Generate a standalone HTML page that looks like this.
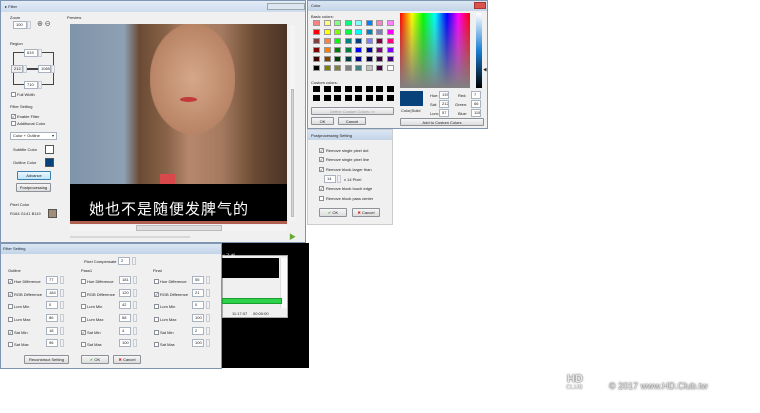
<!DOCTYPE html>
<html><head><meta charset="utf-8"><style>
*{margin:0;padding:0;box-sizing:border-box}
body{width:760px;height:413px;background:#fff;position:relative;overflow:hidden;font-family:"Liberation Sans","Noto Sans CJK SC",sans-serif;font-size:4px;color:#222}
.a{position:absolute}
.t{position:absolute;white-space:nowrap;font-size:4px;line-height:6px}
.in{position:absolute;background:#fff;border:1px solid #a9b3bf;height:8px;font-size:4px;line-height:6px;padding-left:2px;white-space:nowrap;overflow:hidden}
.sp{position:absolute;width:4px;height:8px;border:1px solid #c8ccd2;background:#eef0f3}
.cb{position:absolute;width:5px;height:5px;border:1px solid #8a8f96;background:#fff;font-size:4px;line-height:3px;text-align:center;color:#333}
.btn{position:absolute;border:1px solid #8d9299;border-radius:1px;background:linear-gradient(#f6f6f6,#dcdcdc);font-size:4px;line-height:7px;text-align:center;white-space:nowrap;overflow:hidden}
.win{position:absolute;background:#f0f0f0;border:1px solid #7f96b2}
.tb{position:absolute;left:0;right:0;top:0;height:10px;background:linear-gradient(#dbe6f3,#c3d4e9)}
</style></head><body>

<div class="a" style="left:222px;top:243px;width:87px;height:125px;background:#000"></div>
<div class="a" style="left:222px;top:255px;width:66px;height:63px;background:#f0f0f0;border:1px solid #aaa"></div>
<div class="a" style="left:222px;top:258px;width:57px;height:20px;background:#000"></div>
<div class="t" style="left:223px;top:253px;color:#eee">ζ 了 吧</div>
<div class="a" style="left:280px;top:258px;width:7px;height:50px;background:#fafafa;border-left:1px solid #ddd"></div>
<div class="a" style="left:222px;top:298px;width:60px;height:6px;background:#2ed24a;border:1px solid #1a9e30"></div>
<div class="t" style="left:232px;top:311px">11:17:07</div>
<div class="t" style="left:253px;top:311px">00:00:00</div>

<div class="win" style="left:0;top:0;width:306px;height:243px;background:#f0f0f0">
 <div class="tb" style="height:11px;background:linear-gradient(#e3ecf7,#cddcee)"></div>
 <div class="t" style="left:4px;top:3px;color:#223">▸ Filter</div>
 <div class="a" style="left:266px;top:2px;width:38px;height:7px;border:1px solid #9aa;background:#dde6f0"></div>
 <div class="t" style="left:9px;top:14px">Zoom</div>
 <div class="in" style="left:12px;top:20px;width:14px">100</div><div class="sp" style="left:26px;top:20px"></div>
 <div class="t" style="left:36px;top:21px;font-size:6px">⊕ ⊖</div>
 <div class="t" style="left:9px;top:40px">Region</div>
 <div class="a" style="left:12px;top:51px;width:41px;height:33px;border:1px solid #444"></div>
 <div class="a" style="left:26px;top:67px;width:12px;height:2px;border-top:1px solid #444;border-bottom:1px solid #444"></div>
 <div class="in" style="left:23px;top:48px;width:14px">619</div><div class="sp" style="left:37px;top:48px"></div>
 <div class="in" style="left:10px;top:64px;width:12px;background:#eee">212</div><div class="sp" style="left:22px;top:64px"></div>
 <div class="in" style="left:37px;top:64px;width:13px">1065</div><div class="sp" style="left:50px;top:64px"></div>
 <div class="in" style="left:23px;top:80px;width:14px">710</div><div class="sp" style="left:37px;top:80px"></div>
 <div class="cb" style="left:10px;top:91px"></div><div class="t" style="left:16px;top:91px">Full Width</div>
 <div class="t" style="left:9px;top:103px">Filter Setting</div>
 <div class="cb" style="left:10px;top:113px">✓</div><div class="t" style="left:16px;top:113px">Enable Filter</div>
 <div class="cb" style="left:10px;top:120px"></div><div class="t" style="left:16px;top:120px">Additional Color</div>
 <div class="in" style="left:9px;top:131px;width:47px;height:8px">Color + Outline <span style="position:absolute;right:2px">▾</span></div>
 <div class="t" style="left:12px;top:146px">Subtitle Color</div>
 <div class="a" style="left:44px;top:144px;width:9px;height:9px;border:1px solid #555;background:#fff"></div>
 <div class="t" style="left:12px;top:159px">Outline Color</div>
 <div class="a" style="left:44px;top:157px;width:9px;height:9px;border:1px solid #555;background:#08427b"></div>
 <div class="btn" style="left:16px;top:170px;width:34px;height:9px;border-color:#3c7fb1;background:linear-gradient(#eaf6fd,#bee6fd)">Advance</div>
 <div class="btn" style="left:15px;top:182px;width:35px;height:9px">Postprocessing</div>
 <div class="t" style="left:9px;top:201px">Pixel Color</div>
 <div class="t" style="left:9px;top:210px">R164 G141 B119</div>
 <div class="a" style="left:47px;top:208px;width:9px;height:9px;border:1px solid #555;background:#a48d77"></div>
 <div class="t" style="left:66px;top:14px">Preview</div>
 <div class="a" style="left:69px;top:23px;width:217px;height:200px;overflow:hidden;background:linear-gradient(90deg,#7f93aa 0%,#8ea0b3 25%,#6b4a34 32%,#8a6449 45%,#b7876c 55%,#a47a5f 70%,#6b4a33 85%,#4a3326 100%)">
  <div class="a" style="left:80px;top:0;width:85px;height:110px;border-radius:45%;background:radial-gradient(#d6a78a,#b98466 70%,transparent 72%)"></div>
  <div class="a" style="left:110px;top:73px;width:17px;height:5px;border-radius:50%;background:#c23a3a"></div>
  <div class="a" style="left:90px;top:150px;width:15px;height:30px;background:#d9484a"></div>
  <div class="a" style="left:0;top:160px;width:217px;height:37px;background:#000"></div>
  <div class="t" style="left:19px;top:178px;font-size:15px;line-height:16px;color:#fff;letter-spacing:1px">她也不是随便发脾气的</div>
  <div class="a" style="left:0;top:197px;width:217px;height:3px;background:#b06050"></div>
 </div>
 <div class="a" style="left:289px;top:24px;width:5px;height:196px;background:#f4f4f4"></div>
 <div class="a" style="left:290px;top:88px;width:3px;height:128px;background:#d6d6d6;border:1px solid #bbb"></div>
 <div class="a" style="left:69px;top:224px;width:217px;height:6px;background:#f4f4f4"></div>
 <div class="a" style="left:135px;top:224px;width:86px;height:6px;background:#dedede;border:1px solid #bbb"></div>
 <div class="a" style="left:69px;top:235px;width:120px;height:2px;background:#d8d8d8"></div>
 <div class="t" style="left:288px;top:234px;color:#6a3;font-size:7px">▶</div>
</div>

<div class="win" style="left:0;top:243px;width:222px;height:126px">
 <div class="tb"></div>
 <div class="t" style="left:2px;top:2px;color:#123">Filter Setting</div>
 <div class="t" style="left:83px;top:15px">Pixel Compensate</div>
 <div class="in" style="left:117px;top:13px;width:12px">2</div><div class="sp" style="left:131px;top:13px"></div>
 <div class="t" style="left:7px;top:24px">Outline</div>
 <div class="t" style="left:80px;top:24px">Pass1</div>
 <div class="t" style="left:152px;top:24px">Final</div>
 <div class="cb" style="left:7px;top:35px">✓</div><div class="t" style="left:13px;top:35px">Hue Difference</div><div class="in" style="left:45px;top:32px;width:12px">77</div><div class="sp" style="left:59px;top:32px"></div>
 <div class="cb" style="left:7px;top:48px">✓</div><div class="t" style="left:13px;top:48px">RGB Difference</div><div class="in" style="left:45px;top:45px;width:12px">184</div><div class="sp" style="left:59px;top:45px"></div>
 <div class="cb" style="left:7px;top:60px"></div><div class="t" style="left:13px;top:60px">Lum Min</div><div class="in" style="left:45px;top:57px;width:12px">0</div><div class="sp" style="left:59px;top:57px"></div>
 <div class="cb" style="left:7px;top:73px"></div><div class="t" style="left:13px;top:73px">Lum Max</div><div class="in" style="left:45px;top:70px;width:12px">86</div><div class="sp" style="left:59px;top:70px"></div>
 <div class="cb" style="left:7px;top:86px">✓</div><div class="t" style="left:13px;top:86px">Sat Min</div><div class="in" style="left:45px;top:83px;width:12px">18</div><div class="sp" style="left:59px;top:83px"></div>
 <div class="cb" style="left:7px;top:98px"></div><div class="t" style="left:13px;top:98px">Sat Max</div><div class="in" style="left:45px;top:95px;width:12px">96</div><div class="sp" style="left:59px;top:95px"></div>

 <div class="cb" style="left:80px;top:35px"></div><div class="t" style="left:86px;top:35px">Hue Difference</div><div class="in" style="left:118px;top:32px;width:12px">181</div><div class="sp" style="left:132px;top:32px"></div>
 <div class="cb" style="left:80px;top:48px"></div><div class="t" style="left:86px;top:48px">RGB Difference</div><div class="in" style="left:118px;top:45px;width:12px">120</div><div class="sp" style="left:132px;top:45px"></div>
 <div class="cb" style="left:80px;top:60px"></div><div class="t" style="left:86px;top:60px">Lum Min</div><div class="in" style="left:118px;top:57px;width:12px">42</div><div class="sp" style="left:132px;top:57px"></div>
 <div class="cb" style="left:80px;top:73px"></div><div class="t" style="left:86px;top:73px">Lum Max</div><div class="in" style="left:118px;top:70px;width:12px">58</div><div class="sp" style="left:132px;top:70px"></div>
 <div class="cb" style="left:80px;top:86px">✓</div><div class="t" style="left:86px;top:86px">Sat Min</div><div class="in" style="left:118px;top:83px;width:12px">4</div><div class="sp" style="left:132px;top:83px"></div>
 <div class="cb" style="left:80px;top:98px"></div><div class="t" style="left:86px;top:98px">Sat Max</div><div class="in" style="left:118px;top:95px;width:12px">100</div><div class="sp" style="left:132px;top:95px"></div>

 <div class="cb" style="left:153px;top:35px"></div><div class="t" style="left:159px;top:35px">Hue Difference</div><div class="in" style="left:191px;top:32px;width:12px">55</div><div class="sp" style="left:205px;top:32px"></div>
 <div class="cb" style="left:153px;top:48px">✓</div><div class="t" style="left:159px;top:48px">RGB Difference</div><div class="in" style="left:191px;top:45px;width:12px">21</div><div class="sp" style="left:205px;top:45px"></div>
 <div class="cb" style="left:153px;top:60px"></div><div class="t" style="left:159px;top:60px">Lum Min</div><div class="in" style="left:191px;top:57px;width:12px">0</div><div class="sp" style="left:205px;top:57px"></div>
 <div class="cb" style="left:153px;top:73px"></div><div class="t" style="left:159px;top:73px">Lum Max</div><div class="in" style="left:191px;top:70px;width:12px">100</div><div class="sp" style="left:205px;top:70px"></div>
 <div class="cb" style="left:153px;top:86px"></div><div class="t" style="left:159px;top:86px">Sat Min</div><div class="in" style="left:191px;top:83px;width:12px">2</div><div class="sp" style="left:205px;top:83px"></div>
 <div class="cb" style="left:153px;top:98px"></div><div class="t" style="left:159px;top:98px">Sat Max</div><div class="in" style="left:191px;top:95px;width:12px">100</div><div class="sp" style="left:205px;top:95px"></div>

 <div class="btn" style="left:23px;top:111px;width:45px;height:9px">Reconstruct Setting</div>
 <div class="btn" style="left:80px;top:111px;width:28px;height:9px"><span style="color:#2a2">✔</span> OK</div>
 <div class="btn" style="left:112px;top:111px;width:28px;height:9px"><span style="color:#c22">✖</span> Cancel</div>
</div>

<div class="win" style="left:307px;top:0;width:181px;height:129px">
 <div class="tb"></div>
 <div class="t" style="left:3px;top:2px">Color</div>
 <div class="a" style="left:166px;top:1px;width:12px;height:7px;background:#d9534a;border:1px solid #a33"></div>
 <div class="t" style="left:3px;top:13px">Basic colors:</div>
 <div id="grid"></div>
 <div class="t" style="left:3px;top:79px">Custom colors:</div>
 <div class="btn" style="left:3px;top:106px;width:83px;height:8px;color:#999">Define Custom Colors &gt;&gt;</div>
 <div class="btn" style="left:3px;top:116px;width:23px;height:8px">OK</div>
 <div class="btn" style="left:30px;top:116px;width:28px;height:8px">Cancel</div>
 <div class="a" style="left:92px;top:12px;width:70px;height:75px;background:linear-gradient(to bottom,rgba(128,128,128,0),#808080),linear-gradient(90deg,#f00,#ff0 17%,#0f0 33%,#0ff 50%,#00f 67%,#f0f 83%,#f00)"></div>
 <div class="a" style="left:168px;top:12px;width:6px;height:75px;background:linear-gradient(#fff,#1b7fd4 50%,#000)"></div>
 <div class="t" style="left:175px;top:66px">◀</div>
 <div class="a" style="left:92px;top:90px;width:23px;height:15px;background:#08427b"></div>
 <div class="t" style="left:93px;top:107px">Color|Solid</div>
 <div class="t" style="left:122px;top:92px">Hue:</div><div class="in" style="left:131px;top:90px;width:10px">139</div>
 <div class="t" style="left:122px;top:101px">Sat:</div><div class="in" style="left:131px;top:99px;width:10px">212</div>
 <div class="t" style="left:122px;top:110px">Lum:</div><div class="in" style="left:131px;top:108px;width:10px">57</div>
 <div class="t" style="left:150px;top:92px">Red:</div><div class="in" style="left:163px;top:90px;width:10px">7</div>
 <div class="t" style="left:147px;top:101px">Green:</div><div class="in" style="left:163px;top:99px;width:10px">66</div>
 <div class="t" style="left:150px;top:110px">Blue:</div><div class="in" style="left:163px;top:108px;width:10px">115</div>
 <div class="btn" style="left:92px;top:117px;width:84px;height:8px">Add to Custom Colors</div>
</div>

<div class="win" style="left:307px;top:129px;width:86px;height:96px;border-color:#ccc">
 <div class="tb"></div>
 <div class="t" style="left:3px;top:3px">Postprocessing Setting</div>
 <div class="cb" style="left:11px;top:18px">✓</div><div class="t" style="left:18px;top:18px">Remove single pixel dot</div>
 <div class="cb" style="left:11px;top:27px">✓</div><div class="t" style="left:18px;top:27px">Remove single pixel line</div>
 <div class="cb" style="left:11px;top:37px">✓</div><div class="t" style="left:18px;top:37px">Remove block larger than</div>
 <div class="in" style="left:16px;top:45px;width:12px">14</div><div class="sp" style="left:29px;top:45px"></div>
 <div class="t" style="left:36px;top:47px">x 14 Pixel</div>
 <div class="cb" style="left:11px;top:56px">✓</div><div class="t" style="left:18px;top:56px">Remove block touch edge</div>
 <div class="cb" style="left:11px;top:66px"></div><div class="t" style="left:18px;top:66px">Remove block pass center</div>
 <div class="btn" style="left:11px;top:78px;width:28px;height:9px"><span style="color:#2a2">✔</span> OK</div>
 <div class="btn" style="left:44px;top:78px;width:28px;height:9px"><span style="color:#c22">✖</span> Cancel</div>
</div>

<div class="t" style="left:567px;top:374px;font-size:11px;line-height:11px;font-weight:bold;color:#e8e8e8;text-shadow:0 0 1px #555,0 0 2px #777">HD</div>
<div class="t" style="left:566px;top:385px;font-size:6px;color:#e8e8e8;text-shadow:0 0 1px #555;font-weight:bold">CLUB</div>
<div class="t" style="left:609px;top:381px;font-size:9px;line-height:10px;color:#e8e8e8;text-shadow:0 0 1px #444,0 0 2px #777">© 2017 www.HD.Club.tw</div>

<script>
var c=["#FF8080","#FFFF80","#80FF80","#00FF80","#80FFFF","#0080FF","#FF80C0","#FF80FF","#FF0000","#FFFF00","#80FF00","#00FF40","#00FFFF","#0080C0","#8080C0","#FF00FF","#804040","#FF8040","#00FF00","#008080","#004080","#8080FF","#800040","#FF0080","#800000","#FF8000","#008000","#008040","#0000FF","#0000A0","#800080","#8000FF","#400000","#804000","#004000","#004040","#000080","#000040","#400040","#400080","#000000","#808000","#808040","#808080","#408080","#C0C0C0","#400040","#FFFFFF"];
var g=document.getElementById('grid'),h='';
for(var i=0;i<48;i++){var x=5+(i%8)*10.5,y=19+Math.floor(i/8)*9;h+='<div class="a" style="left:'+x+'px;top:'+y+'px;width:7px;height:6px;border:1px solid #999;background:'+c[i]+'"></div>';}
for(var i=0;i<16;i++){var x=5+(i%8)*10.5,y=85+Math.floor(i/8)*9;h+='<div class="a" style="left:'+x+'px;top:'+y+'px;width:7px;height:6px;background:#000"></div>';}
g.innerHTML=h;
</script>
</body></html>
